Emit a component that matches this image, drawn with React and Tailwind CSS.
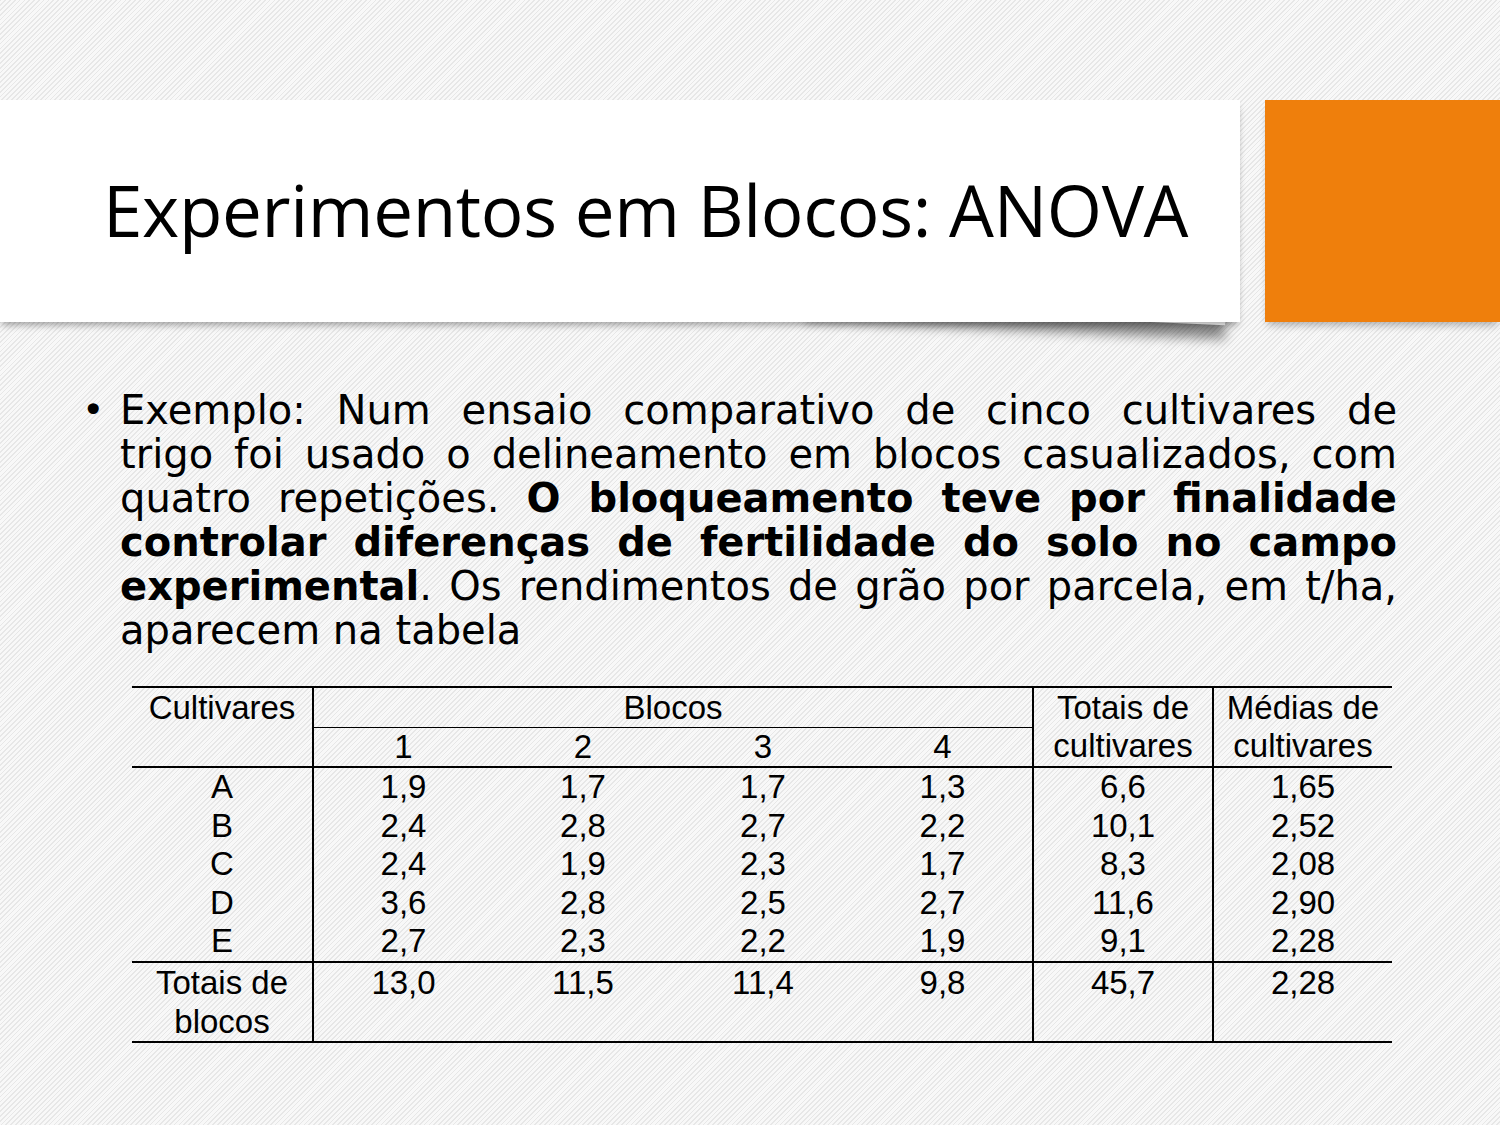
import React from "react";

const rows = [
  ["A", "1,9", "1,7", "1,7", "1,3", "6,6", "1,65"],
  ["B", "2,4", "2,8", "2,7", "2,2", "10,1", "2,52"],
  ["C", "2,4", "1,9", "2,3", "1,7", "8,3", "2,08"],
  ["D", "3,6", "2,8", "2,5", "2,7", "11,6", "2,90"],
  ["E", "2,7", "2,3", "2,2", "1,9", "9,1", "2,28"],
];

export default function App() {
  return (
    <div className="relative z-0 w-[1500px] h-[1125px] overflow-hidden bg-[#f1f1f1] bg-[repeating-linear-gradient(135deg,#e7e7e7_0px,#e7e7e7_1.2px,#f8f8f8_1.2px,#f8f8f8_3.4px)]">
      {/* header band */}
      <div className="mt-[100px] flex h-[222px] gap-[25px]">
        <div className="relative w-[1240px] bg-white shadow-[0_5px_7px_-2px_rgba(0,0,0,0.35)] flex items-center">
          <div className="absolute -z-10 right-[14px] bottom-[6px] w-[420px] h-[30px] rotate-[2.5deg] shadow-[0_14px_12px_rgba(0,0,0,0.45)] bg-white" />
          <h1 className="pl-[103px] pb-[3px] text-[71px] leading-none text-black tracking-[-0.35px] font-['Open_Sans','Noto_Sans',sans-serif]">
            Experimentos em Blocos: ANOVA
          </h1>
        </div>
        <div className="flex-1 bg-[#ef7f0c] shadow-[0_6px_8px_-3px_rgba(0,0,0,0.3)]" />
      </div>

      {/* bullet paragraph */}
      <div className="mt-[66px] flex pl-[82px] pr-[103px] text-[40px] leading-[44px] text-black font-['DejaVu_Sans','Verdana',sans-serif]">
        <div className="w-[38px] shrink-0 text-[38px]">•</div>
        <div className="flex-1 text-justify">
          <div className="whitespace-nowrap [text-align-last:justify]">
            Exemplo: Num ensaio comparativo de cinco cultivares de
          </div>
          <div className="whitespace-nowrap [text-align-last:justify]">
            trigo foi usado o delineamento em blocos casualizados, com
          </div>
          <div className="whitespace-nowrap [text-align-last:justify]">
            quatro repetições. <b>O bloqueamento teve por finalidade</b>
          </div>
          <div className="whitespace-nowrap [text-align-last:justify] font-bold">
            controlar diferenças de fertilidade do solo no campo
          </div>
          <div className="whitespace-nowrap [text-align-last:justify]">
            <b>experimental</b>. Os rendimentos de grão por parcela, em t/ha,
          </div>
          <div className="whitespace-nowrap">aparecem na tabela</div>
        </div>
      </div>

      {/* table */}
      <table className="mt-[34px] ml-[132px] w-[1260px] table-fixed border-collapse text-[33px] text-black text-center font-['Liberation_Sans','Arial',sans-serif]">
        <colgroup>
          <col className="w-[181px]" />
          <col className="w-[180px]" />
          <col className="w-[180px]" />
          <col className="w-[180px]" />
          <col className="w-[180px]" />
          <col className="w-[180px]" />
          <col className="w-[179px]" />
        </colgroup>
        <tbody>
          <tr className="h-[39px]">
            <td rowSpan={2} className="align-top p-0 leading-[39px] border-t-2 border-b-2 border-r-2 border-black">
              Cultivares
            </td>
            <td colSpan={4} className="p-0 leading-[39px] border-t-2 border-b border-black">
              Blocos
            </td>
            <td rowSpan={2} className="p-0 leading-[38px] border-t-2 border-b-2 border-l-2 border-black">
              Totais de
              <br />
              cultivares
            </td>
            <td rowSpan={2} className="p-0 leading-[38px] border-t-2 border-b-2 border-l-2 border-black">
              Médias de
              <br />
              cultivares
            </td>
          </tr>
          <tr className="h-[38px]">
            <td className="p-0 leading-[38px] border-b-2 border-black">1</td>
            <td className="p-0 leading-[38px] border-b-2 border-black">2</td>
            <td className="p-0 leading-[38px] border-b-2 border-black">3</td>
            <td className="p-0 leading-[38px] border-b-2 border-black">4</td>
          </tr>
          {rows.map((r) => (
            <tr key={r[0]} className="h-[38.5px]">
              <td className="p-0 leading-[38.5px] border-r-2 border-black">{r[0]}</td>
              <td className="p-0 leading-[38.5px]">{r[1]}</td>
              <td className="p-0 leading-[38.5px]">{r[2]}</td>
              <td className="p-0 leading-[38.5px]">{r[3]}</td>
              <td className="p-0 leading-[38.5px]">{r[4]}</td>
              <td className="p-0 leading-[38.5px] border-l-2 border-black">{r[5]}</td>
              <td className="p-0 leading-[38.5px] border-l-2 border-black">{r[6]}</td>
            </tr>
          ))}
          <tr className="h-[76px]">
            <td className="p-0 align-top leading-[39px] border-t-2 border-b-2 border-r-2 border-black">
              Totais de
              <br />
              blocos
            </td>
            <td className="p-0 align-top leading-[39px] border-t-2 border-b-2 border-black">13,0</td>
            <td className="p-0 align-top leading-[39px] border-t-2 border-b-2 border-black">11,5</td>
            <td className="p-0 align-top leading-[39px] border-t-2 border-b-2 border-black">11,4</td>
            <td className="p-0 align-top leading-[39px] border-t-2 border-b-2 border-black">9,8</td>
            <td className="p-0 align-top leading-[39px] border-t-2 border-b-2 border-l-2 border-black">45,7</td>
            <td className="p-0 align-top leading-[39px] border-t-2 border-b-2 border-l-2 border-black">2,28</td>
          </tr>
        </tbody>
      </table>
    </div>
  );
}
